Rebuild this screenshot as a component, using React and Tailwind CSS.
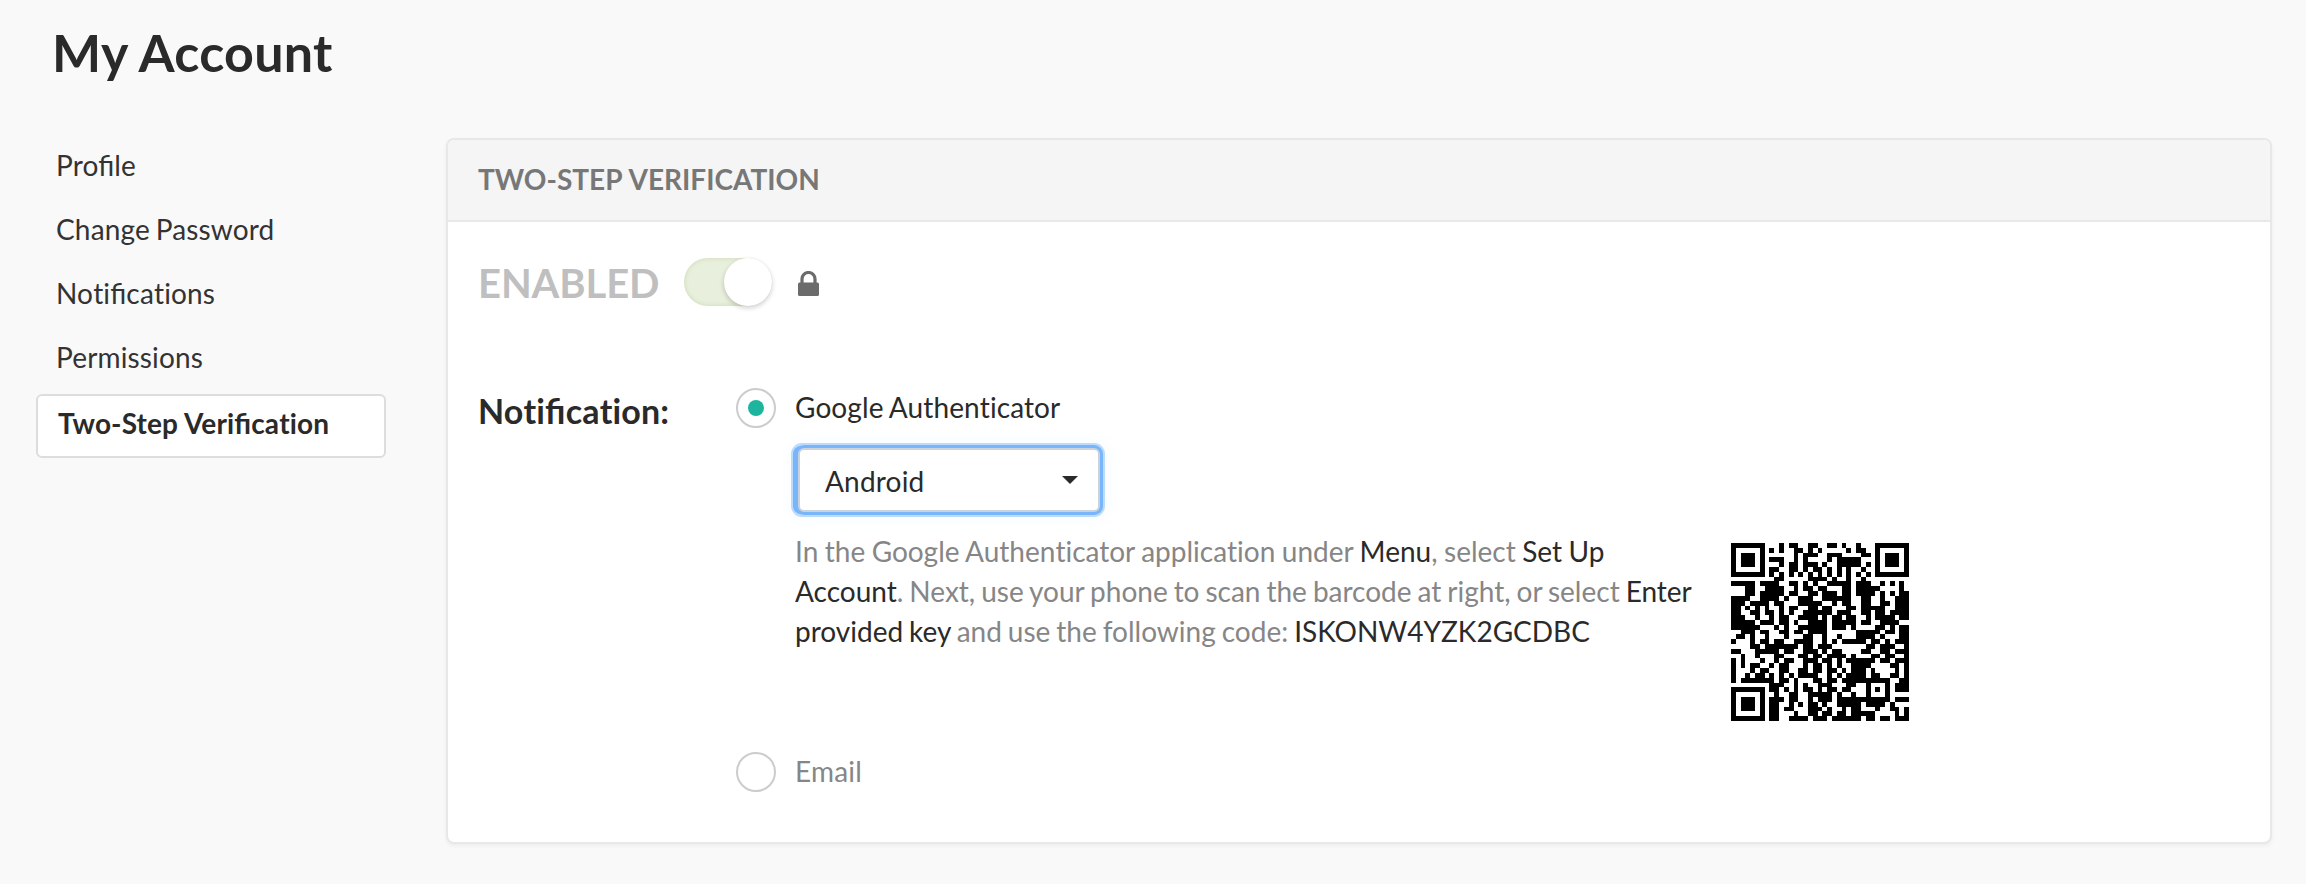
const QR_ROWS = [
  "#######...#.##..##..##.#..#...#######",
  "#.....#.#.#..##.#.#.....#.##..#.....#",
  "#.###.#......#.###..###....##.#.###.#",
  "#.###.#.###..#.#....#.#####...#.###.#",
  "#.###.#...#.##.###.#..#####.#.#.###.#",
  "#.....#.##..##.#.##.#.#.#..#..#.....#",
  "#######.#.#.#.#.#.#.#.#.#.#.#.#######",
  ".........##.....####.#..#..#.........",
  "#####.####..##.#.#..#####.###..#.#.#.",
  "...##..####..#.##.##...##.#####....#.",
  "...##.#####.##..##.###.##.####.#.#.##",
  "####..####.#..###..######..##..#..###",
  "###.####.##...#####..#.##..##..##.###",
  "##.#.#.#..#.##..##.##...##.#####..###",
  "##..##.##.#.#..######.###..##.##.####",
  "###..#..#.##..####.#.##.##..#.####.##",
  "#####.###.##.#..####.#####.##..####..",
  "######...#.#..######.###.#....##.#.##",
  "..###.##..##.##.####......#####.##.##",
  ".##.#..#...#...##..#..#...####.#...##",
  "#...#.##.##..####..#.#.#####.##.#.###",
  "....##.#######.##.###.......##.###..#",
  "##...#####.##..###.#.##....##..##.###",
  "..#..#...##...##.##.####.#...##.##..#",
  "#.#...#..#.##..###.##.#.######.##.###",
  "#.#.##..#.##...#.##.#.#..####....##.#",
  "#...#.##..##..##.##.##.#.###.#....#.#",
  "#..#.##.#.#.#.####..#.#.####.##..##.#",
  "#.#######.##.#...##.##.##########..##",
  "........###..#.#..###...##..#...#.###",
  "#######.##.#.#.##.#.##.##...#.#.#.###",
  "#.....#..#..##..#####.#..#..#...#....",
  "#.###.#.###.##..#.###.###########.###",
  "#.###.#.##..#.#.##.#..#####.####.#...",
  "#.###.#.##.##...###.#..#.##...#..##.#",
  "#.....#.##...#..##.##.##.#####....#.#",
  "#######.##..####.###.######.##.##.###",
];

const NAV = ["Profile", "Change Password", "Notifications", "Permissions"];

// Keeps the "fi" ligature but stops Lato from joining "ti".
function Txt({ children }) {
  return children
    .split(/(ti)/)
    .map((part, i) =>
      part === "ti" ? (
        <span key={i} className="[font-feature-settings:'liga'_0]">
          {part}
        </span>
      ) : (
        part
      ),
    );
}

function QrCode() {
  return (
    <svg className="h-[178px] w-[178px] shrink-0" viewBox="0 0 37 37" shapeRendering="crispEdges">
      {QR_ROWS.map((row, y) =>
        [...row].map((cell, x) =>
          cell === "#" ? <rect key={`${x}-${y}`} x={x} y={y} width="1" height="1" fill="#000" /> : null,
        ),
      )}
    </svg>
  );
}

function Radio({ checked }) {
  return (
    <span className="flex size-10 shrink-0 items-center justify-center rounded-full border-2 border-[#cccccc] bg-white">
      {checked && <span className="size-4 rounded-full bg-[#1eb59f]" />}
    </span>
  );
}

function Key({ children }) {
  return <span className="text-[#2a2a2a]">{children}</span>;
}

export default function App() {
  return (
    <div className="h-[884px] w-[2306px] overflow-hidden bg-[#f9f9f9] font-['Lato',sans-serif] text-[28px] leading-10 text-[#2a2a2a] [font-feature-settings:'liga'_1]">
      <h1 className="h-[138px] pt-5 pl-[52px] text-[52px] leading-[64px] font-bold tracking-[0.3px]">My Account</h1>
      <div className="flex items-start">
        <nav className="ml-9 w-[350px] shrink-0 text-[#333333]">
          {NAV.map((item) => (
            <div key={item} className="h-16 pt-[7px] pl-5 tracking-[0.15px] [word-spacing:-1.5px]">
              <Txt>{item}</Txt>
            </div>
          ))}
          <div className="h-16 rounded-md border-2 border-[#dddddd] bg-white pt-[7px] pl-5 font-bold tracking-[0.13px] text-[#2a2a2a]">
            <Txt>Two-Step Verification</Txt>
          </div>
        </nav>
        <main className="ml-[60px] h-[706px] w-[1826px] overflow-hidden rounded-lg border-2 border-[#e8e8e8] bg-white shadow-[0_2px_4px_rgba(0,0,0,0.05)]">
          <h2 className="h-[82px] border-b-2 border-[#e8e8e8] bg-[#f5f5f5] pt-[19px] pl-[30px] font-bold text-[#777777] [word-spacing:1px]">
            TWO-STEP VERIFICATION
          </h2>
          <div className="flex items-center pt-9 pl-[30px]">
            <span className="w-[206px] pt-0.5 text-[40px] leading-[46px] font-bold tracking-[-0.1px] text-[#bfbfbf]">
              ENABLED
            </span>
            <span className="flex h-12 w-[88px] justify-end rounded-full bg-[#e8efdc] shadow-[inset_0_0_4px_rgba(120,150,60,0.25)]">
              <span className="size-12 rounded-full bg-white shadow-[0_2px_5px_rgba(0,0,0,0.2)]" />
            </span>
            <svg className="mt-[3px] ml-[26px] h-[25px] w-[21px]" viewBox="0 0 21 25">
              <path d="M4 12V8a6.5 6.5 0 0 1 13 0v4" fill="none" stroke="#6b6b6b" strokeWidth="3.2" />
              <rect y="11.5" width="21" height="13.5" rx="1.5" fill="#6b6b6b" />
            </svg>
          </div>
          <div className="flex items-start pt-[82px] pl-[30px]">
            <h3 className="w-[258px] shrink-0 pt-[3px] text-[34px] leading-10 font-bold tracking-[0.15px]">
              <Txt>Notification:</Txt>
            </h3>
            <div>
              <div className="flex h-10 items-start gap-[19px]">
                <Radio checked />
                <span className="-mt-px tracking-[0.1px] [word-spacing:-1px]">
                  <Txt>Google Authenticator</Txt>
                </span>
              </div>
              <div className="mt-5 ml-[62px] flex h-16 w-[302px] items-center justify-between rounded-md border-2 border-[#c9d3de] bg-white pr-5 pl-[25px] shadow-[-3px_0_0_2px_#78b5fa,0_0_0_3px_#78b5fa,-2px_0_0_5px_#bcdcfd,0_0_0_5px_#bcdcfd,0_0_14px_8px_rgba(120,180,250,0.06)]">
                <span className="pt-px tracking-[0.2px]">Android</span>
                <svg className="h-2 w-4" viewBox="0 0 16 8">
                  <path d="M0 0h16L8 8z" fill="#2a2a2a" />
                </svg>
              </div>
              <div className="mt-[19px] ml-[59px] flex">
                <p className="w-[936px] text-[#868686] [word-spacing:-1.2px]">
                  <span className="[word-spacing:-0.7px]">
                    <Txt>In the Google Authenticator application under </Txt>
                    <Key>Menu</Key>, select <Key>Set Up</Key>
                  </span>
                  <br />
                  <Key>Account</Key>. Next, use your phone to scan the barcode at right, or select <Key>Enter</Key>
                  <br />
                  <Key>provided key</Key> and use the following code: <Key>ISKONW4YZK2GCDBC</Key>
                </p>
                <div className="mt-3">
                  <QrCode />
                </div>
              </div>
              <div className="mt-[31px] flex h-10 items-start gap-[19px]">
                <Radio />
                <span className="-mt-px tracking-[0.2px] text-[#868686]">Email</span>
              </div>
            </div>
          </div>
        </main>
      </div>
    </div>
  );
}
